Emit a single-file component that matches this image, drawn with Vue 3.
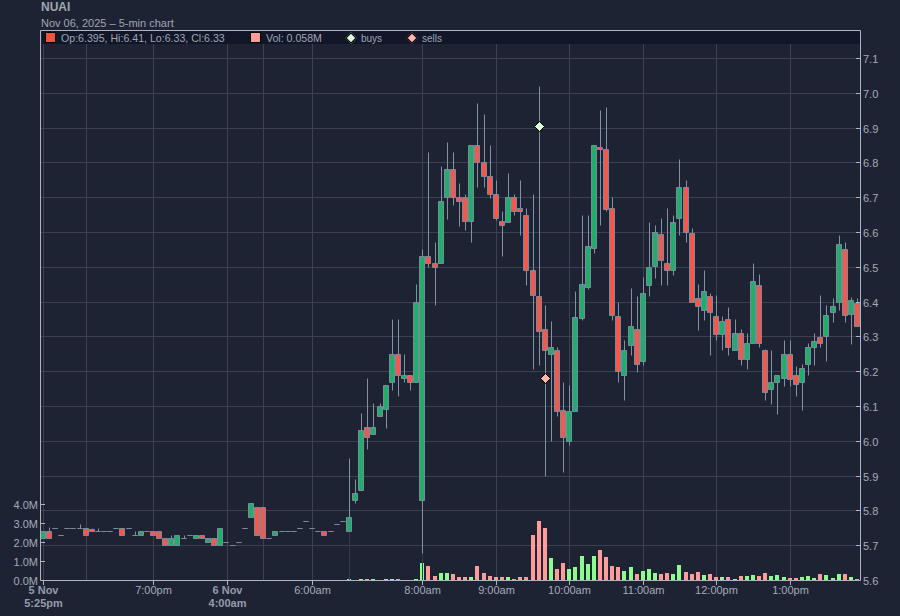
<script setup>
// all vertical values are chart pixels, 5.6 sits on y=580.5 and each 0.1 is 34.8px
const X0 = 43.3
const STEP = 6.122
const BASE_Y = 580.5
const PRICE_STEP = 34.8
const VOL_STEP = 19

const cx = (i) => X0 + STEP * i
const snap = (v) => Math.floor(v) + 0.5

// [bodyTop, bodyBottom, wickTop, wickBottom, 'g' | 'r'], position in the array is the bar index
const raw = [
  [531.3, 538.7, 531.3, 538.7, 'g'], [531.3, 538.7, 527.7, 538.7, 'r'], [528.3, 528.3, 528.3, 528.3, 'g'],
  [535.3, 535.3, 535.3, 535.3, 'g'], [528.3, 528.3, 528.3, 528.3, 'g'], [528.3, 528.3, 528.3, 528.3, 'g'],
  [528.3, 528.3, 524, 528.3, 'g'], [528.3, 535.7, 528.3, 535.7, 'r'], [529.3, 531.7, 528.3, 531.7, 'r'],
  [531.3, 531.3, 528, 531.3, 'g'], [531.3, 531.3, 531.3, 531.3, 'g'], [531.3, 531.3, 531.3, 531.3, 'g'],
  [528.3, 528.3, 528.3, 528.3, 'g'], [528.3, 535.7, 528.3, 535.7, 'r'], [528.3, 528.3, 528.3, 528.3, 'g'],
  [535.3, 535.3, 531.3, 535.3, 'g'], [531.3, 535.7, 531.3, 535.7, 'g'], [531.3, 531.3, 531.3, 531.3, 'g'],
  [531.3, 535.7, 531.3, 535.7, 'r'], [531.3, 538.7, 531.3, 538.7, 'r'], [538.7, 545.7, 538.7, 545.7, 'r'],
  [538.7, 545.7, 535.3, 545.7, 'g'], [535.3, 545.7, 535.3, 545.7, 'g'], [538.7, 538.7, 535.3, 538.7, 'g'],
  [535.3, 535.3, 535.3, 535.3, 'g'], [535.3, 538.7, 535.3, 538.7, 'g'], [535.3, 538.7, 535.3, 538.7, 'r'],
  [538.7, 542.7, 538.7, 542.7, 'g'], [538.7, 545.7, 538.7, 545.7, 'r'], [528.3, 545.7, 528.3, 545.7, 'g'],
  [542.3, 542.3, 542.3, 542.3, 'g'], [545.3, 545.3, 545.3, 545.3, 'g'], [542.3, 542.3, 542.3, 542.3, 'g'],
  [528.3, 528.3, 528.3, 528.3, 'g'], [503.3, 517.7, 503.3, 517.7, 'g'], [507.3, 535.7, 507.3, 535.7, 'r'],
  [507.3, 538.7, 507.3, 538.7, 'r'], [538.7, 538.7, 538.7, 538.7, 'g'], [531.3, 535.7, 531.3, 535.7, 'g'],
  [531.3, 531.3, 531.3, 531.3, 'g'], [531.3, 531.3, 531.3, 531.3, 'g'], [531.3, 531.3, 531.3, 531.3, 'g'],
  [528.3, 528.3, 528.3, 528.3, 'g'], [521.3, 521.3, 521.3, 521.3, 'g'], [528.3, 528.3, 528.3, 528.3, 'g'],
  [531.3, 531.3, 531.3, 531.3, 'g'], [531.3, 535.7, 531.3, 535.7, 'r'], [531.3, 531.3, 531.3, 531.3, 'g'],
  [524.3, 524.3, 524.3, 524.3, 'g'], [521.3, 521.3, 521.3, 521.3, 'g'], [517.3, 531.7, 458, 531.7, 'g'],
  [493.3, 500.7, 479, 503.7, 'g'], [430.3, 490.7, 413.3, 490.7, 'g'], [427.3, 437.7, 378, 449, 'r'],
  [427.3, 434.7, 403.3, 434.7, 'g'], [406.3, 416.7, 403.3, 416.7, 'g'], [385.3, 409.7, 385.3, 428, 'g'],
  [354.3, 382.7, 319.3, 390, 'g'], [354.3, 375.7, 319.3, 396.7, 'r'], [375.7, 378.7, 354.3, 382.7, 'g'],
  [375.7, 382.7, 375.7, 390, 'r'], [302.3, 382.7, 284, 382.7, 'g'], [256.3, 500.7, 249, 553, 'g'],
  [256.3, 263.7, 152, 267.7, 'r'], [263.7, 267.7, 242.3, 305.7, 'r'], [201.3, 263.7, 166.3, 263.7, 'g'],
  [169.3, 197.7, 142, 219, 'g'], [169.3, 197.7, 152, 205, 'r'], [197.7, 201.3, 183.3, 226, 'r'],
  [197.7, 221.7, 194.3, 230, 'r'], [145.3, 221.7, 145.3, 242.7, 'g'], [145.3, 162.3, 103, 187.7, 'r'],
  [162.3, 176.3, 114, 187.7, 'r'], [176.3, 194.3, 145, 198, 'r'], [194.3, 218.3, 180, 220.7, 'r'],
  [221.3, 225.7, 211, 256.7, 'r'], [197.3, 222.3, 173, 222.3, 'g'], [197.3, 211.3, 194.3, 215.7, 'r'],
  [208.3, 211.3, 180, 235.7, 'r'], [215.3, 270.3, 208.3, 285, 'r'], [270.3, 295.7, 194.3, 369, 'r'],
  [296.3, 331.7, 86, 365, 'r'], [329.3, 350.3, 305, 476.7, 'r'], [347.3, 354.7, 321, 441.7, 'g'],
  [350.3, 411.7, 347.3, 416.7, 'r'], [410.3, 437.7, 382, 472.7, 'r'], [411.3, 441.7, 385, 445, 'g'],
  [317.3, 411.7, 291, 411.7, 'g'], [284.3, 318.7, 215, 320.7, 'g'], [246.3, 287.3, 215, 289, 'g'],
  [145.3, 248.7, 145.3, 253.7, 'g'], [147.3, 149.7, 110, 225.7, 'r'], [149.3, 209.7, 107, 211.7, 'r'],
  [208.3, 315.7, 197, 320, 'r'], [316.3, 371.7, 302, 382.7, 'r'], [350.3, 375.7, 340, 400, 'g'],
  [326.3, 345.7, 288, 355, 'g'], [329.3, 364.7, 296, 372, 'r'], [293.3, 361.7, 277, 365, 'g'],
  [267.3, 285.7, 222.3, 296, 'g'], [232.3, 266.7, 225, 278, 'g'], [234.3, 260.3, 218, 285, 'r'],
  [263, 270.3, 208, 285, 'r'], [222.3, 270, 215, 275, 'g'], [187, 218.7, 159, 235.7, 'g'],
  [187.3, 232.3, 180, 242.7, 'r'], [233, 302.3, 228.7, 302.3, 'r'], [298.3, 306.7, 284, 330, 'r'],
  [291, 310, 270, 320, 'g'], [296.3, 312.3, 293.3, 355, 'r'], [316, 334.3, 295, 340.7, 'r'],
  [321.3, 334.3, 316.7, 350.7, 'g'], [319.3, 347.3, 307.3, 355, 'r'], [333.3, 350.7, 319.3, 350.7, 'g'],
  [333.3, 359.3, 329.3, 365, 'r'], [343.3, 359.3, 333.3, 369, 'g'], [281.3, 343.3, 263.3, 343.3, 'g'],
  [285.3, 343.3, 274, 347.3, 'r'], [350.3, 392.3, 349.3, 400, 'r'], [382.3, 389.7, 350.3, 404, 'g'],
  [375.3, 382.3, 375.3, 414, 'g'], [354.3, 378.7, 340, 386, 'g'], [354.3, 379.7, 340, 386, 'r'],
  [375.3, 384.3, 366, 396.7, 'r'], [368.3, 382.3, 364, 410, 'g'], [347.3, 364.3, 343.3, 375, 'g'],
  [341.3, 347.3, 333.3, 365, 'g'], [337.3, 343.3, 295, 347.3, 'r'], [315.3, 336.3, 305, 361.7, 'g'],
  [306.3, 312.3, 298.3, 322.7, 'g'], [244.3, 302.7, 235, 310, 'g'], [249.3, 315.3, 242.3, 322.7, 'r'],
  [300.7, 314.3, 297, 344, 'g'], [303.3, 326.3, 298.3, 326.3, 'r'],
]

const candles = raw.map(([top, bottom, hi, lo, side], i) => {
  const t = snap(top)
  const b = snap(bottom)
  return {
    side,
    wickX: snap(cx(i)),
    hi: snap(hi),
    lo: snap(lo),
    body: `M${Math.floor(cx(i) - 3) + 0.5} ${t}h5v${b - t}h-5z`,
  }
})

// volume heights in px, bars 0-49 are too small to see
const volumes = {
  50: [1, 'g'], 52: [1, 'g'], 53: [1, 'r'], 54: [1, 'g'], 56: [1, 'g'], 57: [1, 'g'], 58: [1, 'r'], 61: [1, 'g'],
  62: [17, 'g'], 63: [14, 'r'], 64: [4, 'r'], 65: [7, 'g'], 66: [7, 'g'], 67: [6, 'r'], 68: [3, 'r'], 69: [3, 'r'],
  70: [3, 'g'], 71: [14, 'r'], 72: [7, 'r'], 73: [4, 'r'], 74: [3, 'r'], 75: [3, 'r'], 76: [3, 'g'], 77: [1, 'r'],
  78: [3, 'r'], 79: [3, 'r'], 80: [45, 'r'], 81: [59, 'r'], 82: [52, 'r'], 83: [22, 'g'], 84: [11, 'r'], 85: [17, 'r'],
  86: [11, 'g'], 87: [13, 'g'], 88: [24, 'g'], 89: [16, 'g'], 90: [24, 'g'], 91: [30, 'r'], 92: [23, 'r'], 93: [14, 'r'],
  94: [13, 'r'], 95: [9, 'g'], 96: [13, 'g'], 97: [6, 'r'], 98: [9, 'g'], 99: [11, 'g'], 100: [7, 'g'], 101: [6, 'r'],
  102: [7, 'r'], 103: [6, 'g'], 104: [15, 'g'], 105: [8, 'r'], 106: [6, 'r'], 107: [8, 'r'], 108: [5, 'g'], 109: [6, 'r'],
  110: [3, 'r'], 111: [3, 'g'], 112: [3, 'r'], 113: [1, 'g'], 114: [4, 'r'], 115: [4, 'g'], 116: [5, 'g'], 117: [4, 'r'],
  118: [7, 'r'], 119: [4, 'g'], 120: [5, 'g'], 121: [3, 'g'], 122: [2, 'r'], 123: [2, 'r'], 124: [3, 'g'], 125: [4, 'g'],
  126: [2, 'g'], 127: [6, 'r'], 128: [5, 'g'], 129: [2, 'g'], 130: [6, 'g'], 131: [6, 'r'], 132: [3, 'g'], 133: [1, 'r'],
}

const volumeBars = Object.entries(volumes).map(([i, [h, side]]) => ({
  x: Math.floor(cx(Number(i)) - 2),
  y: 580 - h,
  h,
  side,
}))

const priceTicks = Array.from({ length: 16 }, (_, k) => ({
  y: snap(BASE_Y - PRICE_STEP * k),
  label: (5.6 + k / 10).toFixed(1),
}))

const volumeTicks = [0, 1, 2, 3, 4].map((m) => ({
  y: snap(BASE_Y - VOL_STEP * m),
  label: `${m}.0M`,
}))

const verticalGrid = [43.5, 86.5, 153.5, 227.5, 263.5, 312.5, 422.5, 496.5, 569.5, 643.5, 716.5, 790.5]

const timeTicks = [
  { x: 43.5, lines: ['5 Nov', '5:25pm'], bold: true },
  { x: 153.5, lines: ['7:00pm'] },
  { x: 227.5, lines: ['6 Nov', '4:00am'], bold: true },
  { x: 312.5, lines: ['6:00am'] },
  { x: 422.5, lines: ['8:00am'] },
  { x: 496.5, lines: ['9:00am'] },
  { x: 569.5, lines: ['10:00am'] },
  { x: 643.5, lines: ['11:00am'] },
  { x: 716.5, lines: ['12:00pm'] },
  { x: 790.5, lines: ['1:00pm'] },
]
</script>

<template>
  <div class="page">
    <header class="head">
      <div class="symbol">NUAI</div>
      <div class="subtitle">Nov 06, 2025 – 5-min chart</div>
    </header>

    <div class="chart">
      <svg class="plot" width="900" height="586" viewBox="0 30 900 586">
        <!-- Grid -->
        <g class="grid">
          <line v-for="x in verticalGrid" :key="x" :x1="x" :x2="x" y1="31" y2="580" />
          <line v-for="t in priceTicks" :key="t.label" x1="41" x2="860" :y1="t.y" :y2="t.y" />
        </g>

        <!-- Volume -->
        <rect
          v-for="v in volumeBars"
          :key="v.x"
          :class="v.side === 'g' ? 'vol-up' : 'vol-down'"
          :x="v.x"
          :y="v.y"
          width="4"
          :height="v.h"
        />

        <!-- Candles -->
        <line class="wick-dim" x1="349.5" x2="349.5" y1="531" y2="580" />
        <line class="wick-dim" x1="422.5" x2="422.5" y1="553" y2="580" />
        <g v-for="(c, i) in candles" :key="i">
          <line class="wick" :x1="c.wickX" :x2="c.wickX" :y1="c.hi" :y2="c.lo" />
          <path :class="['body', c.side === 'g' ? 'up' : 'down']" :d="c.body" />
        </g>

        <!-- Trade markers -->
        <path class="marker buy" d="M539.5 121.5l5 5-5 5-5-5z" />
        <path class="marker sell" d="M545.5 373.5l5 5-5 5-5-5z" />

        <!-- Axes -->
        <path class="axis" d="M40.5 30.5H860.5V580.5H40.5z" />
        <g class="axis-ticks">
          <line v-for="t in priceTicks" :key="t.label" x1="856" x2="860" :y1="t.y" :y2="t.y" />
          <line v-for="t in volumeTicks" :key="t.label" x1="41" x2="45" :y1="t.y" :y2="t.y" />
          <line v-for="t in timeTicks" :key="t.x" :x1="t.x" :x2="t.x" y1="581" y2="585" />
        </g>

        <g class="labels">
          <text v-for="t in priceTicks" :key="t.label" x="863" :y="t.y + 4">{{ t.label }}</text>
          <text v-for="t in volumeTicks" :key="t.label" class="left" x="38" :y="t.y + 4">{{ t.label }}</text>
          <g v-for="t in timeTicks" :key="t.x" :class="{ strong: t.bold }">
            <text
              v-for="(line, n) in t.lines"
              :key="line"
              class="center"
              :x="t.x"
              :y="594 + n * 13"
            >{{ line }}</text>
          </g>
        </g>
      </svg>

      <div class="legend">
        <span class="item">
          <i class="swatch red"></i>
          Op:6.395, Hi:6.41, Lo:6.33, Cl:6.33
        </span>
        <span class="item vol">
          <i class="swatch pink"></i>
          Vol: 0.058M
        </span>
        <span class="item buys">
          <i class="diamond light"></i>
          buys
        </span>
        <span class="item sells">
          <i class="diamond rose"></i>
          sells
        </span>
      </div>
    </div>
  </div>
</template>

<style scoped>
.page {
  width: 900px;
  height: 616px;
  overflow: hidden;
  background: #1e2333;
  font-family: "Liberation Sans", Arial, sans-serif;
  color: #9fa6b4;
}

.head {
  height: 30px;
  padding-left: 41px;
  box-sizing: border-box;
}

.symbol {
  height: 15px;
  font-size: 12px;
  font-weight: 700;
  line-height: 15px;
}

.subtitle {
  height: 15px;
  font-size: 11px;
  line-height: 16px;
}

.chart {
  position: relative;
  height: 586px;
}

.plot {
  display: block;
}

.grid line {
  stroke: #3c4052;
  stroke-width: 1;
}

.wick {
  stroke: #7f92a6;
  stroke-width: 1;
}

.wick-dim {
  stroke: #33384a;
  stroke-width: 1;
}

.body {
  stroke: #7b8a9b;
  stroke-width: 1;
}

.body.up {
  fill: #21ae6d;
}

.body.down {
  fill: #f5574a;
}

.vol-up {
  fill: #8dfb8d;
}

.vol-down {
  fill: #ff9b9b;
}

.marker {
  stroke: #000;
  stroke-width: 1;
}

.marker.buy {
  fill: #d9ffd9;
}

.marker.sell {
  fill: #ffb5b0;
}

.axis {
  fill: none;
  stroke: #aeb4c2;
  stroke-width: 1;
}

.axis-ticks line {
  stroke: #aeb4c2;
  stroke-width: 1;
}

.labels text {
  font-size: 11px;
  fill: #a5abb9;
}

.labels .left {
  text-anchor: end;
}

.labels .center {
  text-anchor: middle;
}

.labels .strong text {
  font-weight: 700;
  fill: #949baa;
}

/* Legend sits on top of the plot's first row */
.legend {
  position: absolute;
  top: 1px;
  left: 42px;
  width: 818px;
  height: 13px;
  display: flex;
  align-items: center;
  background: #111729;
  font-size: 10.6px;
  line-height: 13px;
}

.item {
  display: flex;
  align-items: center;
  gap: 5px;
  padding-top: 1px;
  white-space: nowrap;
}

.item:first-child {
  margin-left: 3px;
}

.vol {
  position: absolute;
  left: 208px;
}

.buys {
  position: absolute;
  left: 303px;
  font-size: 10px;
  gap: 4px;
}

.sells {
  position: absolute;
  left: 364px;
  font-size: 10px;
  gap: 4px;
}

.swatch {
  display: block;
  width: 9px;
  height: 9px;
  margin-top: -1px;
  border: 1px solid #000;
  box-sizing: content-box;
}

.swatch.red {
  background: #f5513f;
}

.swatch.pink {
  background: #ff9b9b;
}

.diamond {
  display: block;
  width: 6px;
  height: 6px;
  margin: -1px 2px 0;
  border: 1px solid #000;
  transform: rotate(45deg);
}

.diamond.light {
  background: #d9ffd9;
}

.diamond.rose {
  background: #ffb5b0;
}
</style>

<style>
body {
  background: #1e2333;
}
</style>
